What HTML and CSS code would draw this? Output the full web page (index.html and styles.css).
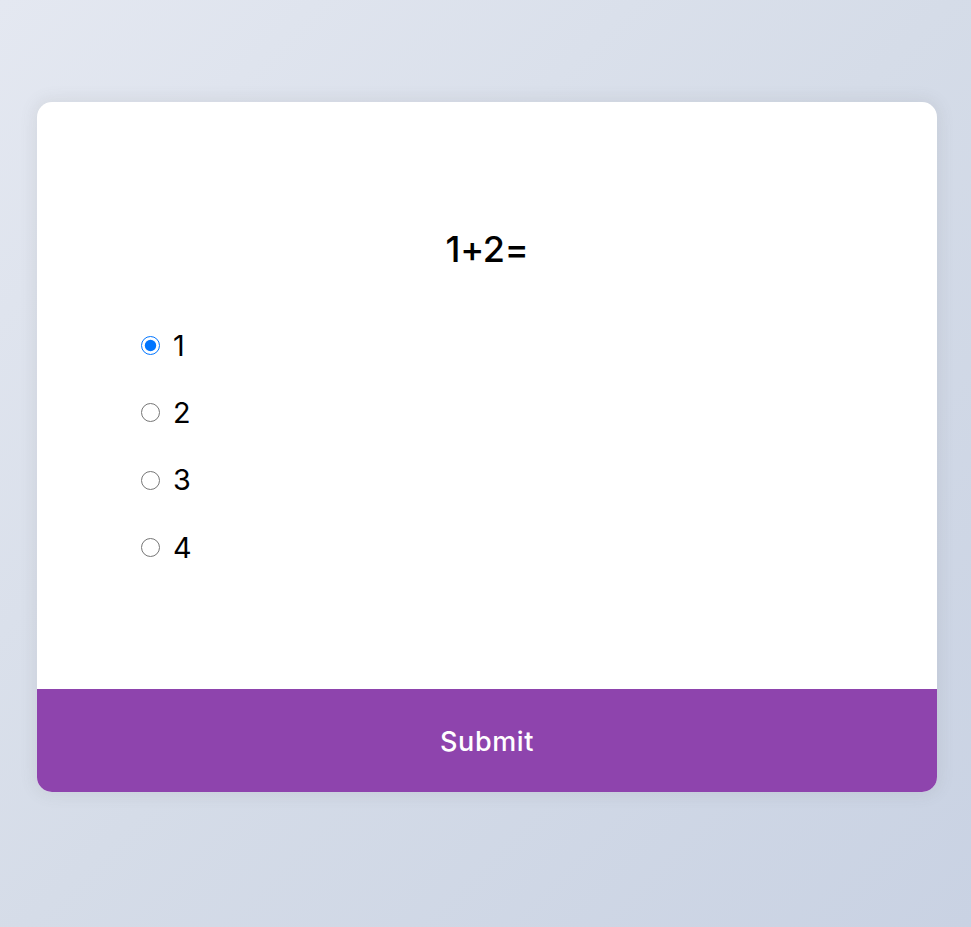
FILE: index.html
```html
<!DOCTYPE html>
<html lang="en">
<head>
<meta charset="UTF-8">
<title>Quiz</title>
<link rel="stylesheet" href="styles.css">
</head>
<body>
<div class="page">
  <div class="quiz">
    <div class="quiz-header">
      <h2 class="question">1+2=</h2>
      <ul class="answers">
        <li class="answer"><input type="radio" name="a" id="a" checked><label for="a">1</label></li>
        <li class="answer"><input type="radio" name="a" id="b"><label for="b">2</label></li>
        <li class="answer"><input type="radio" name="a" id="c"><label for="c">3</label></li>
        <li class="answer"><input type="radio" name="a" id="d"><label for="d">4</label></li>
      </ul>
    </div>
    <button class="submit">Submit</button>
  </div>
</div>
</body>
</html>
```

FILE: styles.css
```css
* { box-sizing: border-box; }
html, body { margin: 0; height: 100%; }
body {
  font-family: "Inter", "Open Sans", sans-serif;
  background: linear-gradient(135deg, #e4e8f1 0%, #d5dce8 50%, #c9d2e3 100%);
  overflow: hidden;
}
.page {
  padding: 102px 0 0 37px;
}
.quiz {
  width: 900px;
  background: #fff;
  border-radius: 15px;
  box-shadow: 0 0 15px 3px rgba(100, 100, 100, 0.1);
  overflow: hidden;
}
.quiz-header {
  padding: 96px;
}
.question {
  margin: 0;
  padding: 24px;
  text-align: center;
  font-size: 36px;
  font-weight: 500;
  line-height: 54px;
  letter-spacing: -0.3px;
  color: #000;
}
.answers {
  list-style: none;
  margin: 0;
  padding: 0;
}
.answer {
  font-size: 28.8px;
  line-height: 43.2px;
  margin: 24px 0;
  display: flex;
  align-items: center;
  color: #000;
}
.answer input {
  width: 19px;
  height: 19px;
  margin: 0 13px 0 8px;
  flex: none;
}
.answer label { font-weight: 400; }
.submit {
  display: block;
  width: 100%;
  border: none;
  background: #8e44ad;
  color: #fff;
  font-family: inherit;
  font-size: 27px;
  font-weight: 500;
  letter-spacing: 0.6px;
  line-height: 40px;
  padding: 33px 0 30px;
  cursor: pointer;
}
```
